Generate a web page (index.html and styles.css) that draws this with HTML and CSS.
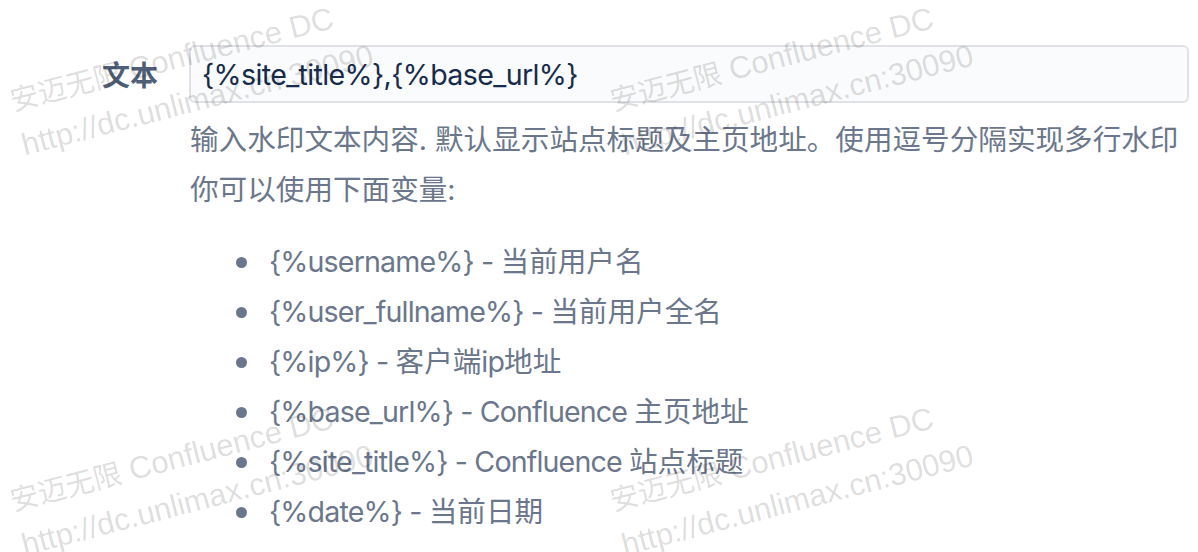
FILE: index.html
```html
<!DOCTYPE html>
<html lang="zh">
<head>
<meta charset="utf-8">
<title>水印设置</title>
<link rel="stylesheet" href="styles.css">
</head>
<body>
<div class="page">
  <div class="field">
    <label class="label" for="wm-text">文本</label>
    <div class="control">
      <input id="wm-text" class="text-input" type="text" value="{%site_title%},{%base_url%}">
      <div class="desc">
        <p class="line">输入水印文本内容. 默认显示站点标题及主页地址。使用逗号分隔实现多行水印</p>
        <p class="line">你可以使用下面变量:</p>
        <ul class="vars">
          <li><span class="lat">{%username%} - </span>当前用户名</li>
          <li><span class="lat">{%user_fullname%} - </span>当前用户全名</li>
          <li><span class="lat">{%ip%} - </span>客户端<span class="lat">ip</span>地址</li>
          <li><span class="lat">{%base_url%} - Confluence </span>主页地址</li>
          <li><span class="lat">{%site_title%} - Confluence </span>站点标题</li>
          <li><span class="lat">{%date%} - </span>当前日期</li>
        </ul>
      </div>
    </div>
  </div>
  <div class="watermarks" aria-hidden="true">
    <div class="wm wm-1"><div><span class="wm-cjk">安迈无限</span> Confluence DC</div><div>http://dc.unlimax.cn:30090</div></div>
    <div class="wm wm-2"><div><span class="wm-cjk">安迈无限</span> Confluence DC</div><div>http://dc.unlimax.cn:30090</div></div>
    <div class="wm wm-3"><div><span class="wm-cjk">安迈无限</span> Confluence DC</div><div>http://dc.unlimax.cn:30090</div></div>
    <div class="wm wm-4"><div><span class="wm-cjk">安迈无限</span> Confluence DC</div><div>http://dc.unlimax.cn:30090</div></div>
  </div>
</div>
</body>
</html>
```
FILE: styles.css
```css
html, body {
  margin: 0;
  padding: 0;
  background: #ffffff;
}

body {
  font-family: Inter, "Noto Sans CJK SC", "Noto Sans", sans-serif;
  font-size: 28.6px;
  color: #172b4d;
  overflow: hidden;
}

.page {
  position: relative;
  width: 1198px;
  height: 552px;
  padding-top: 45px;
  box-sizing: border-box;
}

.field {
  display: grid;
  grid-template-columns: 189px 1000px;
  align-items: start;
}

.label {
  height: 58px;
  display: flex;
  align-items: center;
  justify-content: flex-end;
  padding-right: 31px;
  font-weight: 600;
  color: #505f79;
  font-size: 28px;
}

.control {
  display: flex;
  flex-direction: column;
}

.text-input {
  box-sizing: border-box;
  height: 58px;
  width: 1000px;
  margin: 0;
  padding: 0 11px;
  border: 2px solid #dfe1e6;
  border-radius: 6px;
  background: #fafbfc;
  font-family: inherit;
  font-size: 28.6px;
  letter-spacing: -0.64px;
  color: #172b4d;
  outline: none;
}

.desc {
  margin-top: 12px;
  padding-left: 1px;
  color: #6b778c;
  line-height: 50px;
}

.line {
  margin: 0;
}

.vars {
  list-style: none;
  margin: 22px 0 0 0;
  padding: 0 0 0 46px;
}

.vars li {
  display: flex;
  align-items: center;
  height: 50px;
  white-space: pre;
}

.vars li::before {
  content: "";
  flex: none;
  width: 11px;
  height: 11px;
  border-radius: 50%;
  background: #6b778c;
  margin-right: 22px;
}

.lat {
  letter-spacing: -0.85px;
}

.watermarks {
  position: absolute;
  inset: 0;
  pointer-events: none;
}

.wm {
  position: absolute;
  transform-origin: 0 0;
  transform: rotate(-14.5deg);
  font-family: "Liberation Sans", "Noto Sans CJK SC", sans-serif;
  font-size: 31px;
  line-height: 45px;
  color: rgba(0, 0, 0, 0.14);
  white-space: nowrap;
}

.wm-cjk {
  font-size: 28.5px;
}

.wm-1 { left: 5px; top: 79px; }
.wm-2 { left: 605px; top: 79px; }
.wm-3 { left: 5px; top: 479px; }
.wm-4 { left: 605px; top: 479px; }
```
